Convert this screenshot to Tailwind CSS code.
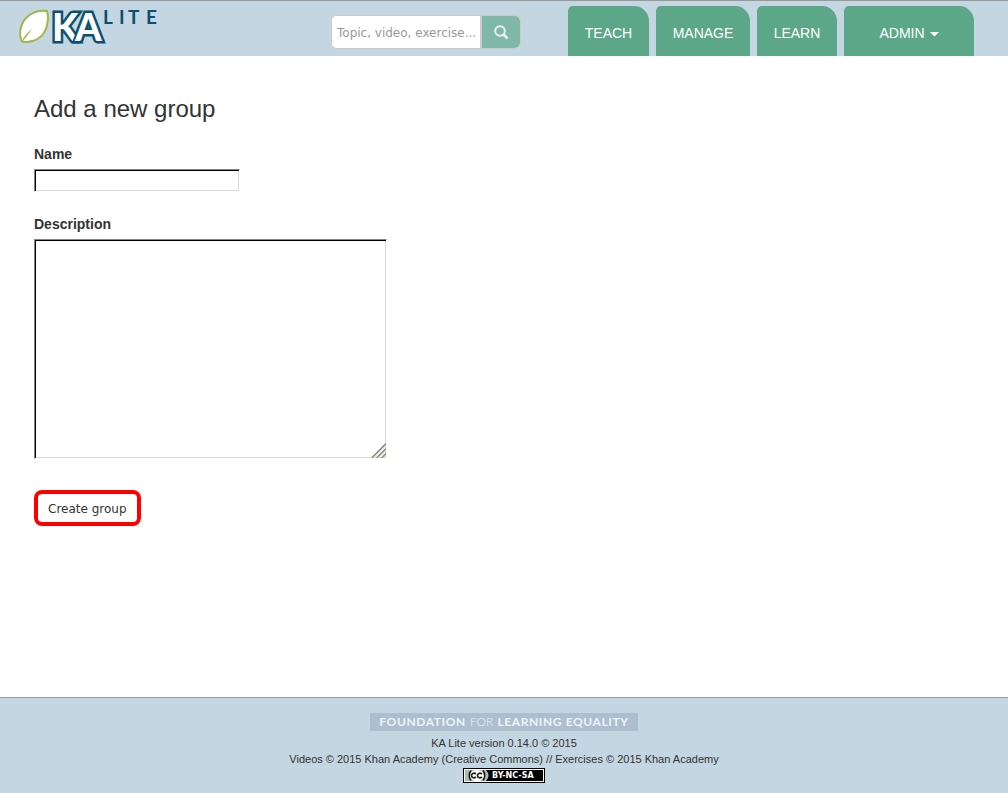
<!DOCTYPE html>
<html lang="en">
<head>
<meta charset="utf-8">
<meta name="viewport" content="width=device-width, initial-scale=1">
<title>Add a new group | KA Lite</title>
<script src="https://cdn.jsdelivr.net/npm/@tailwindcss/browser@4"></script>
</head>
<body class="flex min-h-screen flex-col bg-white font-['Liberation_Sans',Arial,sans-serif] text-sm text-[#333]">
<header class="flex h-14 shrink-0 items-start border-t border-[#999] bg-[#c4d6e2] pr-[34px] pl-[18px]">
  <a href="#" aria-label="KA Lite home" class="mt-2">
    <svg width="142" height="36" viewBox="0 0 142 36" class="overflow-visible">
      <path d="M4 32.500C1 27 1 17 8 9C14 3 22 1 29 2C31 8 30 17 26 24C20 32 11 34 4 32.500Z" fill="#fff" stroke="#9db84b" stroke-width="2" stroke-linejoin="round"/>
      <path d="M4 32C6 27 9 24 14 20L9 27L5 32Z" fill="#9db84b"/>
      <g font-family="Lato, sans-serif" font-weight="900" font-size="38">
        <g fill="#0b5070" stroke="#0b5070" stroke-width="5"><text x="34" y="32">K</text><text x="57" y="32">A</text></g>
        <g fill="#fff"><text x="34" y="32">K</text><text x="57" y="32" paint-order="stroke" stroke="#0b5070" stroke-width="4">A</text></g>
      </g>
      <text x="85 101 110 128" y="15" font-family="Lato, sans-serif" font-weight="700" font-size="19" fill="#0b5070">LITE</text>
    </svg>
  </a>
  <form class="mt-3.5 mr-[47px] ml-auto flex h-[34px] w-[190px] overflow-hidden rounded-md border border-[#ccc] bg-white">
    <input type="text" aria-label="Search" placeholder="Topic, video, exercise..." class="min-w-0 flex-1 bg-white pt-0.5 pl-[5px] font-['DejaVu_Sans',sans-serif] text-xs outline-none placeholder:text-[#999]">
    <button type="button" aria-label="Search" class="flex w-10 items-center justify-center border-l-2 border-[#ccc] bg-[#7fb8a6]">
      <svg width="15" height="15" viewBox="0 0 15 15" fill="none" stroke="#e8f2f2"><circle cx="6" cy="6" r="4.800" stroke-width="2"/><path d="M9.500 9.500L13.500 13.500" stroke-width="2.600"/></svg>
    </button>
  </form>
  <nav class="mt-[5px] flex gap-[7px] text-white">
    <a href="#" class="flex h-[50px] w-[81px] items-center justify-center rounded-tl-[5px] rounded-tr-[15px] bg-[#5ca788] pt-1">TEACH</a>
    <a href="#" class="flex h-[50px] w-[94px] items-center justify-center rounded-tl-[5px] rounded-tr-[15px] bg-[#5ca788] pt-1">MANAGE</a>
    <a href="#" class="flex h-[50px] w-[80px] items-center justify-center rounded-tl-[5px] rounded-tr-[15px] bg-[#5ca788] pt-1">LEARN</a>
    <a href="#" class="flex h-[50px] w-[130px] items-center justify-center gap-[5px] rounded-tl-[5px] rounded-tr-[15px] bg-[#5ca788] pt-1">ADMIN
      <svg width="9" height="5" viewBox="0 0 9 5" fill="#fff" class="mt-0.5"><path d="M0 0H9L4.500 4.500Z"/></svg>
    </a>
  </nav>
</header>
<main class="flex-1 px-[34px] pt-[39px]">
  <h1 class="text-2xl leading-7">Add a new group</h1>
  <form>
    <label for="name" class="mt-[21px] block font-bold">Name</label>
    <input id="name" type="text" class="mt-[5px] block h-[23px] w-[206px] border border-t-[#85857d] border-r-white border-b-white border-l-[#85857d] bg-white px-1 shadow-[inset_1px_1px_0_#000,inset_-1px_-1px_0_#dadad5] outline-none">
    <label for="description" class="mt-[22px] block font-bold">Description</label>
    <div class="relative mt-[5px] w-[353px]">
      <textarea id="description" class="block h-[220px] w-full resize-none border border-t-[#85857d] border-r-white border-b-white border-l-[#85857d] bg-white p-1 shadow-[inset_1px_1px_0_#000,inset_-1px_-1px_0_#dadad5] outline-none"></textarea>
      <svg class="pointer-events-none absolute right-px bottom-px" width="15" height="15" viewBox="0 0 15 15" stroke-width="1.300"><path d="M2 15L15 2M7 15L15 7M12 15L15 12" stroke="#dadad0"/><path d="M0.500 15L15 0.500M5.500 15L15 5.500M10.500 15L15 10.500" stroke="#85857a"/></svg>
    </div>
    <button type="button" class="mt-[31px] h-9 rounded-lg border-4 border-[#f00] bg-white px-2.5 pt-0.5 font-['DejaVu_Sans',sans-serif] text-xs">Create group</button>
  </form>
</main>
<footer class="flex h-24 shrink-0 flex-col items-center border-t border-[#999] bg-[#c4d6e2] pt-[15px] text-[11px] leading-4">
  <a href="#" class="flex h-[18px] w-[268px] items-center justify-center gap-1 bg-[#adbfcf] font-[Lato,sans-serif] text-xs font-bold tracking-wider text-[#edf3f8]"><span>FOUNDATION</span><span class="font-light tracking-normal">FOR</span><span>LEARNING EQUALITY</span></a>
  <p class="mt-1">KA Lite version 0.14.0 © 2015</p>
  <p>Videos © 2015 Khan Academy (Creative Commons) // Exercises © 2015 Khan Academy</p>
  <a href="#" aria-label="Creative Commons BY-NC-SA" class="mt-px">
    <svg width="82" height="15" viewBox="0 0 82 15">
      <path d="M0 0H82V15H0Z"/><path d="M1 1H81V14H1Z" fill="#fff"/><path d="M2 2H80V13H2Z"/>
      <path d="M2 2H23Q28 7.500 23 13H2Z" fill="#b1b8ae"/>
      <ellipse cx="14" cy="7.500" rx="7.500" ry="5.500" fill="#fff"/>
      <path d="M8 2.500Q4.500 7.500 8 12.500M20 2.500Q23.500 7.500 20 12.500" fill="none" stroke="#111" stroke-width="1.600"/>
      <path d="M13 6C10.500 4 8.500 6 8.500 7.500S10.500 11 13 9M19 6C16.500 4 14.500 6 14.500 7.500S16.500 11 19 9" fill="none" stroke="#222" stroke-width="1.700"/>
      <text x="29" y="10" font-family="DejaVu Sans, sans-serif" font-weight="700" font-size="8" fill="#fff">BY-NC-SA</text>
    </svg>
  </a>
</footer>
</body>
</html>
